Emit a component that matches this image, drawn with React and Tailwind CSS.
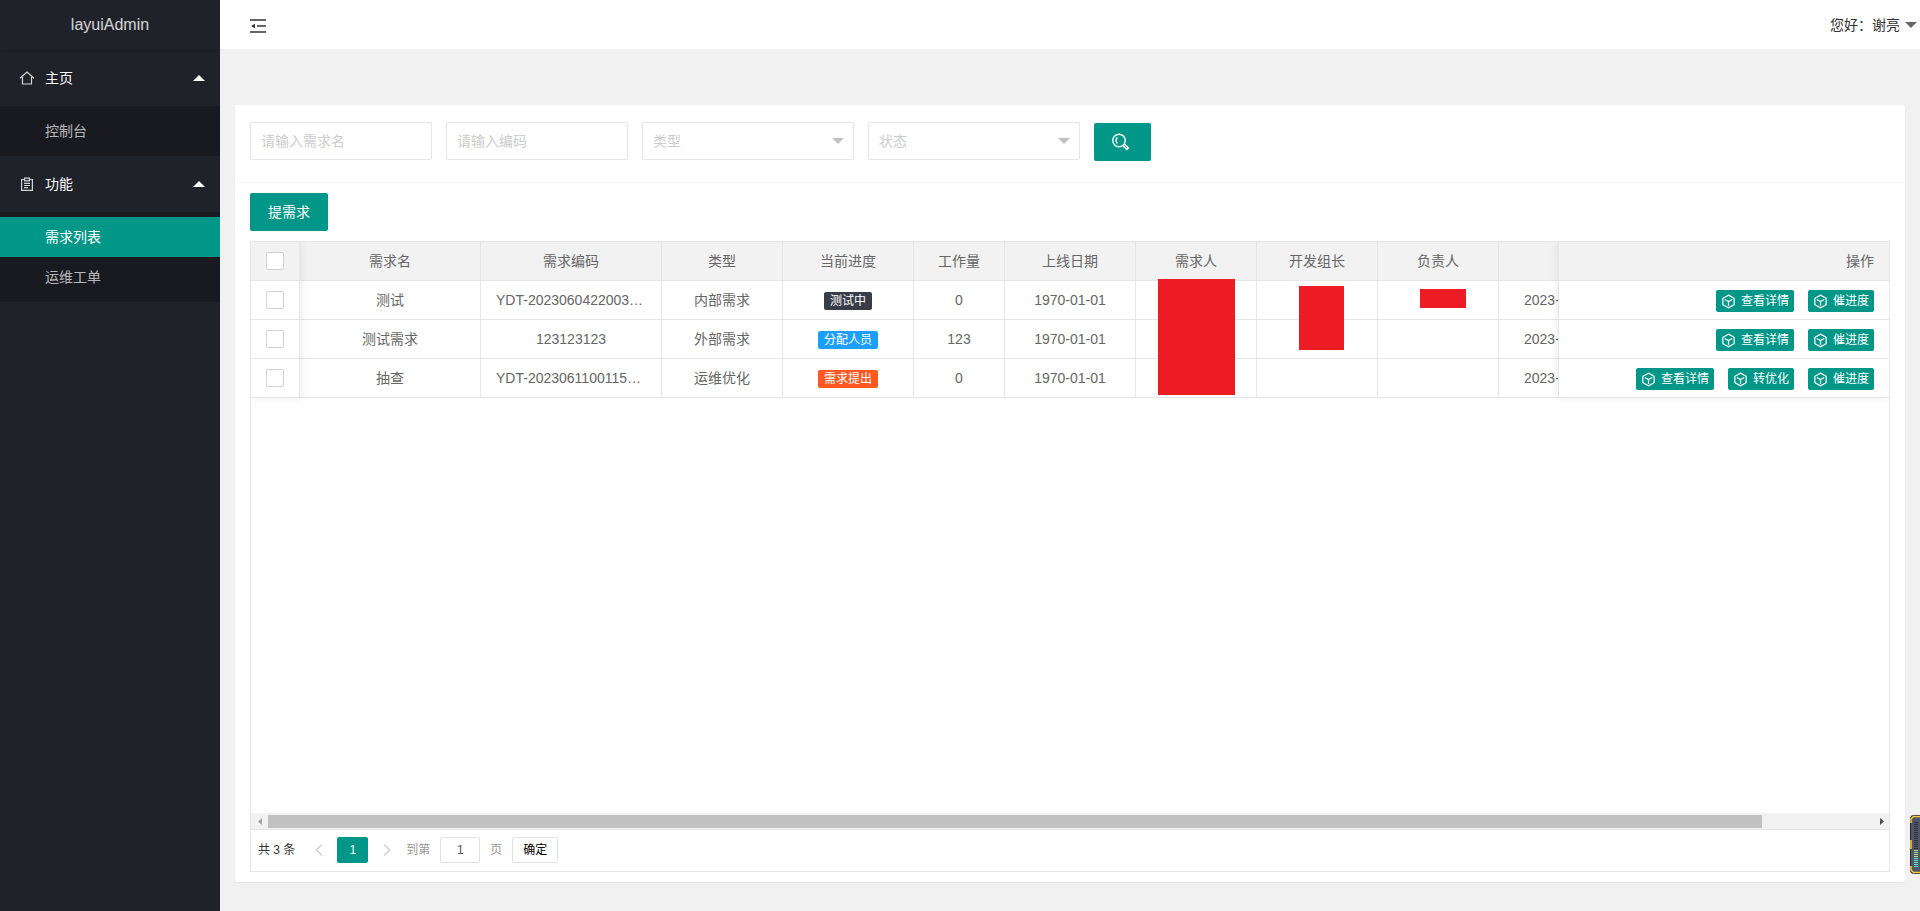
import { useState } from "react";

const columns = [
    { key: "name", title: "需求名", width: 181 },
    { key: "code", title: "需求编码", width: 181 },
    { key: "type", title: "类型", width: 121 },
    { key: "status", title: "当前进度", width: 131 },
    { key: "work", title: "工作量", width: 91 },
    { key: "date", title: "上线日期", width: 131 },
    { key: "owner", title: "需求人", width: 121 },
    { key: "leader", title: "开发组长", width: 121 },
    { key: "charge", title: "负责人", width: 121 },
];

const rows = [
    {
        id: 1, name: "测试", code: "YDT-2023060422003…", type: "内部需求", status: "测试中", color: "bg-[#393d49]",
        work: "0", date: "1970-01-01", created: "2023-", actions: ["查看详情", "催进度"],
    },
    {
        id: 2, name: "测试需求", code: "123123123", type: "外部需求", status: "分配人员", color: "bg-[#1e9fff]",
        work: "123", date: "1970-01-01", created: "2023-", actions: ["查看详情", "催进度"],
    },
    {
        id: 3, name: "抽查", code: "YDT-2023061100115…", type: "运维优化", status: "需求提出", color: "bg-[#ff5722]",
        work: "0", date: "1970-01-01", created: "2023-", actions: ["查看详情", "转优化", "催进度"],
    },
];

// Bloques rojos que tapan los nombres, parten de la primera fila
const masks = {
    owner: "left-[22px] -top-[2px] w-[77px] h-[116px]",
    leader: "left-[42px] top-[5px] w-[45px] h-[64px]",
    charge: "left-[42px] top-[8px] w-[46px] h-[19px]",
};

function HomeIcon() {
    return (
        <svg className="h-4 w-4" viewBox="0 0 16 16" fill="none" stroke="currentColor" strokeWidth="1.2">
            <path d="M1 8.2 8 2l7 6.2M3.5 7v7h9V7" />
        </svg>
    );
}

function ClipboardIcon() {
    return (
        <svg className="h-4 w-4" viewBox="0 0 16 16" fill="none" stroke="currentColor" strokeWidth="1.2">
            <path d="M5 3.5H2.6v10.9h10.8V3.5H11" />
            <path d="M5.6 2.2h4.8v2.6H5.6zM5 7.3h6M5 9.5h6M5 11.7h4" />
        </svg>
    );
}

function CubeIcon() {
    return (
        <svg className="h-[15px] w-[15px]" viewBox="0 0 16 16" fill="none" stroke="currentColor" strokeWidth="1.3">
            <path d="M8 1.2 14 4.6v6.8L8 14.8 2 11.4V4.6z" />
            <path d="M4 5.8 8 8.100l4-2.300M8 8.100v4.600" />
        </svg>
    );
}

function Caret({ className }) {
    return (
        <svg className={className} viewBox="0 0 12 6" fill="currentColor">
            <path d="M0 0h12L6 6z" />
        </svg>
    );
}

function NavGroup({ icon, title, items }) {
    return (
        <li>
            <a href="#" className="flex h-14 items-center pl-[19px] pr-[15px] text-white">
                <span className="text-white/80">{icon}</span>
                <span className="ml-[10px] flex-1">{title}</span>
                <Caret className="h-[6px] w-3 rotate-180" />
            </a>
            <ul className="rounded-xs bg-[#191a1f] py-[5px]">
                {items.map((item) => (
                    <li key={item.text}>
                        <a
                            href="#"
                            className={`block pl-[45px] leading-10 ${item.active ? "bg-[#009688] text-white" : "text-white/70"}`}
                        >
                            {item.text}
                        </a>
                    </li>
                ))}
            </ul>
        </li>
    );
}

function Sidebar() {
    return (
        <aside className="w-[220px] shrink-0 bg-[#20222a]">
            <div className="h-[50px] text-center text-base leading-[49px] text-white/80 shadow-[0_1px_2px_0_rgba(0,0,0,0.15)]">
                layuiAdmin
            </div>
            <ul>
                <NavGroup icon={<HomeIcon />} title="主页" items={[{ text: "控制台" }]} />
                <NavGroup
                    icon={<ClipboardIcon />}
                    title="功能"
                    items={[{ text: "需求列表", active: true }, { text: "运维工单" }]}
                />
            </ul>
        </aside>
    );
}

function Header() {
    return (
        <header className="flex h-[49px] items-center justify-between bg-white pl-[30px] pr-[3px]">
            <button aria-label="折叠菜单" className="mt-[3px] text-[#333]">
                <svg className="h-[14px] w-4" viewBox="0 0 16 14" fill="none" stroke="currentColor" strokeWidth="1.4">
                    <path d="M0 1h16M7 7h9M0 13h16" />
                    <path d="M1 7l4-2.2v4.4z" fill="currentColor" stroke="none" />
                </svg>
            </button>
            <a href="#" className="flex items-center gap-[5px] text-[#333]">
                您好：谢亮
                <Caret className="h-[6px] w-3 text-[#666]" />
            </a>
        </header>
    );
}

function SelectBox({ label }) {
    return (
        <div className="relative w-[212px]">
            <select
                aria-label={label}
                className="h-[38px] w-full appearance-none rounded-xs border border-[#e6e6e6] bg-white px-[10px] text-[#ccc]"
            >
                <option>{label}</option>
            </select>
            <Caret className="pointer-events-none absolute right-[10px] top-4 h-[6px] w-3 text-[#c2c2c2]" />
        </div>
    );
}

function SearchBar() {
    const field = "h-[38px] w-[182px] rounded-xs border border-[#e6e6e6] px-[10px] placeholder:text-[#ccc]";

    return (
        <form className="flex h-[78px] items-start gap-[14px] border-b border-[#f6f6f6] px-[15px] pt-[17px]">
            <input aria-label="需求名" placeholder="请输入需求名" className={field} />
            <input aria-label="编码" placeholder="请输入编码" className={field} />
            <SelectBox label="类型" />
            <SelectBox label="状态" />
            <button type="button" aria-label="搜索" className="mt-px h-[38px] w-[57px] rounded-xs bg-[#009688] pl-[18px] text-white">
                <svg className="h-[18px] w-[18px]" viewBox="0 0 18 18" fill="none" stroke="currentColor" strokeWidth="1.4">
                    <circle cx="7" cy="7.5" r="6.2" />
                    <path d="M5.4 4.4a4 4 0 0 0 0 6" />
                    <path d="M10.800 12.500l4 4 1.600-1.600-4-4" />
                </svg>
            </button>
        </form>
    );
}

function ActionButton({ children }) {
    return (
        <button className="flex h-[22px] items-center gap-[5px] rounded-xs bg-[#009688] px-[5px] text-xs text-white">
            <CubeIcon />
            {children}
        </button>
    );
}

function Check({ label }) {
    return (
        <input
            type="checkbox"
            aria-label={label}
            className="mx-auto block h-[18px] w-[18px] appearance-none rounded-xs border border-[#d2d2d2] bg-white"
        />
    );
}

function CellContent({ row, field }) {
    if (field === "status") {
        return (
            <span className={`inline-block h-[18px] rounded-xs px-[6px] align-middle text-xs leading-[18px] text-white ${row.color}`}>
                {row.status}
            </span>
        );
    }
    // los códigos largos ocupan toda la celda
    if (field === "code" && row.code.length > 12) {
        return <div className="pl-[15px] text-left">{row.code}</div>;
    }
    return row[field];
}

function DataTable() {
    const cell = "relative h-[39px] border-b border-r border-[#e6e6e6] p-0 text-center font-normal whitespace-nowrap";

    return (
        <div className="relative overflow-hidden pb-3">
            <div className="relative">
                <table className="w-full table-fixed border-separate border-spacing-0">
                    <colgroup>
                        <col className="w-[49px]" />
                        {columns.map((c) => <col key={c.key} style={{ width: c.width }} />)}
                        <col />
                        <col className="w-[331px]" />
                    </colgroup>
                    <thead className="bg-[#f2f2f2]">
                        <tr>
                            <th className={cell}><Check label="全选" /></th>
                            {columns.map((c) => <th key={c.key} className={cell}>{c.title}</th>)}
                            <th className="border-b border-[#e6e6e6]"></th>
                            <th className="border-b border-l border-[#e6e6e6] pr-[15px] text-right font-normal">操作</th>
                        </tr>
                    </thead>
                    <tbody>
                        {rows.map((row, i) => (
                            <tr key={row.id}>
                                <td className={cell}><Check label={row.name} /></td>
                                {columns.map((c) => (
                                    <td key={c.key} className={cell}>
                                        <CellContent row={row} field={c.key} />
                                        {i === 0 && masks[c.key] && (
                                            <span className={`absolute z-10 bg-[#ed1c24] ${masks[c.key]}`} />
                                        )}
                                    </td>
                                ))}
                                <td className="overflow-hidden border-b border-[#e6e6e6] p-0 pl-[25px]">{row.created}</td>
                                <td className="border-b border-l border-[#e6e6e6] p-0 pr-[15px]">
                                    <div className="flex justify-end gap-[14px] pt-[2px]">
                                        {row.actions.map((a) => <ActionButton key={a}>{a}</ActionButton>)}
                                    </div>
                                </td>
                            </tr>
                        ))}
                    </tbody>
                </table>
                {/* Sombras de las columnas fijas */}
                <div className="pointer-events-none absolute left-0 top-0 h-full w-[49px] shadow-[1px_0_8px_rgba(0,0,0,0.08)]" />
                <div className="pointer-events-none absolute right-0 top-0 h-full w-[331px] shadow-[-1px_0_8px_rgba(0,0,0,0.08)]" />
            </div>
        </div>
    );
}

function ScrollBar() {
    return (
        <div className="flex h-4 items-center bg-[#f1f1f1]">
            <span className="flex w-[17px] justify-center text-[#a3a3a3]">
                <svg className="h-[7px] w-1" viewBox="0 0 4 7" fill="currentColor"><path d="M4 0v7L0 3.5z" /></svg>
            </span>
            <div className="flex-1">
                <div className="h-[13px] w-[93%] bg-[#c1c1c1]" />
            </div>
            <span className="flex w-[15px] justify-center text-[#505050]">
                <svg className="h-[7px] w-1" viewBox="0 0 4 7" fill="currentColor"><path d="M0 0v7l4-3.5z" /></svg>
            </span>
        </div>
    );
}

function Pager() {
    const [page, setPage] = useState("1");

    return (
        <div className="flex h-[42px] items-start border-t border-[#e6e6e6] pl-[7px] pt-[7px] text-xs leading-[26px]">
            <span className="text-[#333]">共 3 条</span>
            <button aria-label="上一页" className="ml-5 flex h-[26px] w-[10px] items-center text-[#d2d2d2]">
                <svg className="h-3 w-2" viewBox="0 0 8 12" fill="none" stroke="currentColor" strokeWidth="1.5"><path d="M7 0.5 1.2 6 7 11.5" /></svg>
            </button>
            <button className="ml-3 h-[26px] w-[31px] rounded-xs bg-[#009688] text-white">1</button>
            <button aria-label="下一页" className="ml-[15px] flex h-[26px] w-[10px] items-center text-[#d2d2d2]">
                <svg className="h-3 w-2" viewBox="0 0 8 12" fill="none" stroke="currentColor" strokeWidth="1.5"><path d="M1 0.5 6.8 6 1 11.5" /></svg>
            </button>
            <label className="ml-[13px] flex text-[#999]">
                到第
                <input
                    value={page}
                    onChange={(e) => setPage(e.target.value)}
                    className="mx-[10px] h-[26px] w-10 rounded-xs border border-[#e2e2e2] text-center text-[#555]"
                />
                页
            </label>
            <button className="ml-[10px] h-[26px] w-[46px] rounded-xs border border-[#e2e2e2] leading-6 text-black">确定</button>
        </div>
    );
}

// Medidor flotante pegado al borde derecho
function Meter() {
    return (
        <svg className="absolute right-0 top-[815px] h-[59px] w-[10px]" viewBox="0 0 10 59">
            <rect x="0.5" y="0.5" width="16" height="58" rx="3" fill="#50576a" stroke="#2b2b2b" />
            <path d="M10 1.500H3.500L1 4v4M1 25v9M1 51v4l2.500 2.500H10" fill="none" stroke="#fbc93d" strokeWidth="1.500" />
            <path d="M6 7v28" stroke="#2e3038" strokeWidth="4" strokeDasharray="1 1" />
            <path d="M6 35v8" stroke="#a4e87a" strokeWidth="4" strokeDasharray="1 1" />
            <path d="M6 43v10" stroke="#4ff0c5" strokeWidth="4" strokeDasharray="1 1" />
        </svg>
    );
}

export default function App() {
    return (
        <div className="relative flex min-h-screen bg-[#f1f1f1] font-['Liberation_Sans','Noto_Sans_CJK_SC',sans-serif] text-sm text-[#666]">
            <Sidebar />
            <div className="flex min-w-0 flex-1 flex-col">
                <Header />
                <main className="mx-[15px] mb-[29px] mt-14 flex flex-1 flex-col rounded-xs bg-white shadow-[0_1px_2px_0_rgba(0,0,0,0.05)]">
                    <SearchBar />
                    <div className="flex flex-1 flex-col px-[15px] py-[10px]">
                        <button className="h-[38px] w-[78px] rounded-xs bg-[#009688] text-white">提需求</button>
                        <div className="mt-[10px] flex flex-1 flex-col border border-[#e6e6e6]">
                            <DataTable />
                            <div className="mt-auto">
                                <ScrollBar />
                                <Pager />
                            </div>
                        </div>
                    </div>
                </main>
            </div>
            <Meter />
        </div>
    );
}
